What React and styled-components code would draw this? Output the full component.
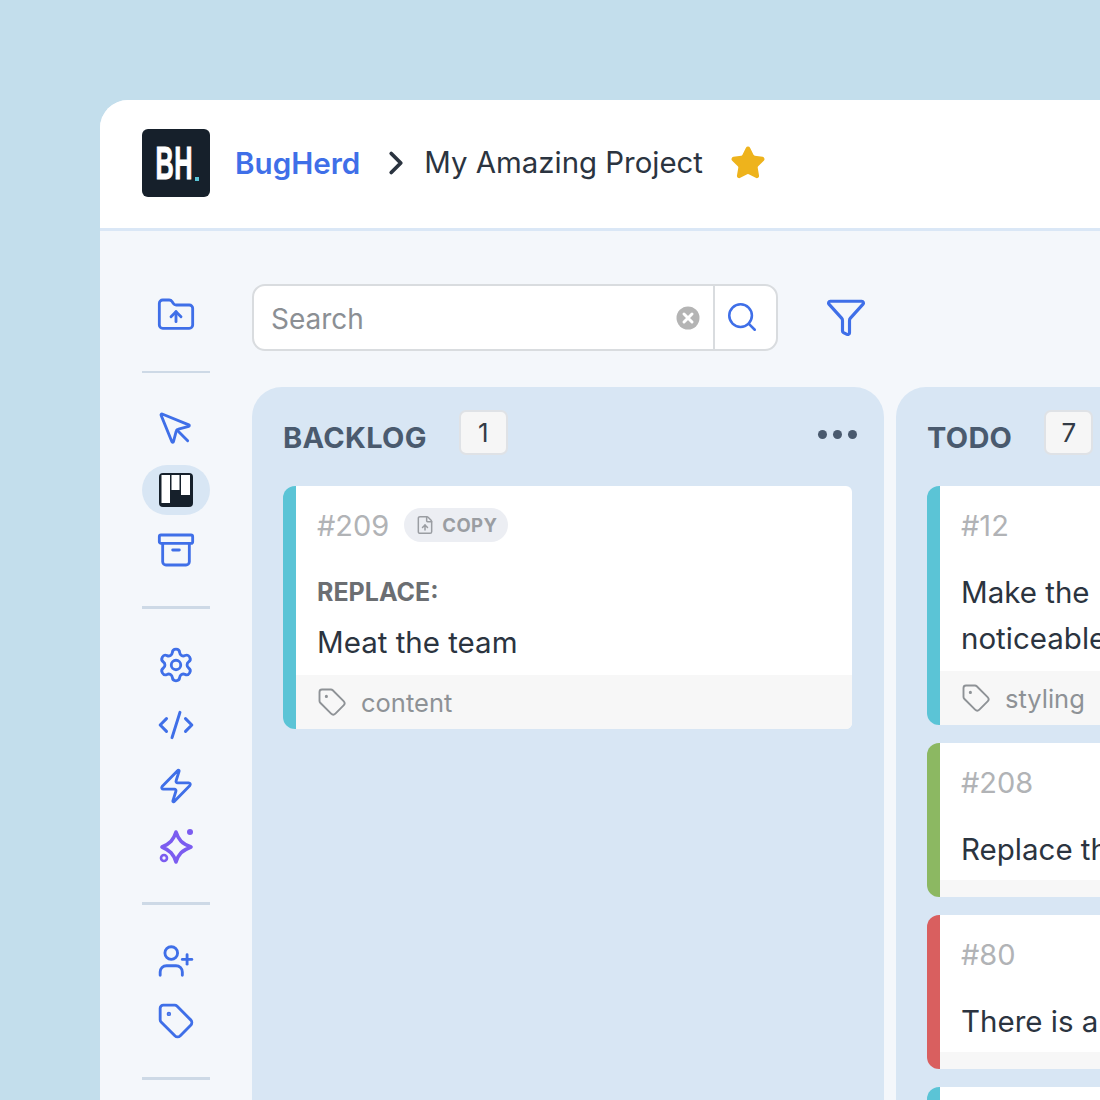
import React from 'react';
import styled, { createGlobalStyle } from "styled-components";
import {
    FolderUp, MousePointer, Archive, Settings, CodeXml, Zap, UserPlus, Tag,
    Search, Filter, ChevronRight, Star, FileUp
} from "lucide-react";

const GlobalStyle = createGlobalStyle`
    html, body { margin: 0; padding: 0; }
    body { background: #c3deec; font-family: Inter, "Liberation Sans", sans-serif; }
    * { box-sizing: border-box; }
`;

const Page = styled.div`
    width: 1100px;
    height: 1100px;
    padding: 100px 0 0 100px;
    overflow: hidden;
    background: #c3deec;
`;

const Window = styled.div`
    width: 1000px;
    height: 1000px;
    border-top-left-radius: 28px;
    overflow: hidden;
    background: #f4f7fb;
`;

const Header = styled.header`
    height: 131px;
    display: flex;
    align-items: center;
    padding: 0 0 3px 42px;
    background: #fff;
    border-bottom: 3px solid #dae7f6;
    color: #2b3440;
`;

const Logo = styled.div`
    position: relative;
    width: 68px;
    height: 68px;
    border-radius: 6px;
    background: #16202b;
    display: flex;
    align-items: center;
    justify-content: center;
    margin-right: 25px;
    color: #fff;
`;

const LogoText = styled.span`
    font-family: "Liberation Sans", sans-serif;
    font-weight: 700;
    font-size: 46px;
    line-height: 1;
    letter-spacing: 1px;
    -webkit-text-stroke: 1px #fff;
    transform: translateX(-2px) scaleX(0.55);
`;

const LogoDot = styled.i`
    position: absolute;
    left: 53px;
    top: 48px;
    width: 4px;
    height: 4px;
    background: #5bc4d6;
`;

const Brand = styled.a`
    color: #3f6fe8;
    font-size: 29.6px;
    font-weight: 600;
    margin-right: 17px;
`;

const ProjectName = styled.span`
    font-size: 29.4px;
    margin: 0 27px 0 9px;
    white-space: nowrap;
`;

const Body = styled.div`
    display: flex;
    height: 869px;
    padding: 53px 0 0 42px;
`;

const Rail = styled.nav`
    width: 68px;
    flex-shrink: 0;
    margin-right: 42px;
    padding-top: 6px;
    display: flex;
    flex-direction: column;
    gap: 11px;
`;

const RailItem = styled.div`
    height: 50px;
    display: flex;
    align-items: center;
    justify-content: center;
    border-radius: 25px;
    color: ${(p) => p.$color || "#3f6fe8"};
    background: ${(p) => (p.$active ? "#d8e6f4" : "transparent")};
`;

const RailDivider = styled.hr`
    width: 68px;
    height: 3px;
    border: 0;
    margin: 20px 0;
    background: #cdd9e6;
`;

const Main = styled.main`
    flex: 1;
    min-width: 0;
    display: flex;
    flex-direction: column;
`;

const Toolbar = styled.div`
    display: flex;
    align-items: center;
    gap: 47px;
    height: 66px;
    margin-bottom: 37px;
    color: #3f6fe8;
`;

const SearchBox = styled.div`
    width: 526px;
    height: 67px;
    display: flex;
    align-items: center;
    background: #fff;
    border: 2px solid #d9dcdf;
    border-radius: 13px;
    padding-left: 15px;
`;

const SearchInput = styled.input`
    flex: 1;
    min-width: 0;
    border: 0;
    outline: 0;
    padding: 4px 2px 0;
    background: none;
    font: 400 28px Inter, sans-serif;
    color: #2b3440;
    &::placeholder { color: #8b8f94; opacity: 1; }
`;

const ClearButton = styled.span`
    margin: 2px 13px 0 0;
    display: flex;
`;

const SearchButton = styled.span`
    width: 63px;
    height: 100%;
    padding-right: 7px;
    display: flex;
    align-items: center;
    justify-content: center;
    border-left: 2px solid #d9dcdf;
`;

const Board = styled.div`
    flex: 1;
    display: flex;
    gap: 12px;
`;

const Column = styled.section`
    width: 632px;
    flex-shrink: 0;
    padding: 23px 32px 0 31px;
    background: #d8e6f4;
    border-radius: 30px 30px 0 0;
    overflow: hidden;
`;

const ColumnHead = styled.div`
    display: flex;
    align-items: center;
    height: 45px;
    margin-bottom: 31px;
`;

const ColumnTitle = styled.h2`
    margin: 9px 32px 0 0;
    font-size: 29px;
    font-weight: 700;
    color: #4a5a6e;
    letter-spacing: 0.3px;
`;

const Count = styled.span`
    width: 49px;
    height: 45px;
    display: flex;
    align-items: center;
    justify-content: center;
    background: #f6f6f6;
    border: 2px solid #dfe2e6;
    border-radius: 7px;
    font-size: 26px;
    color: #333b46;
`;

const Dots = styled.span`
    margin: 3px -5px 0 auto;
    display: flex;
    gap: 6px;
    & > i {
        width: 9px;
        height: 9px;
        border-radius: 50%;
        background: #4a5a6e;
    }
`;

const CardList = styled.div`
    display: flex;
    flex-direction: column;
    gap: 18px;
`;

const Card = styled.article`
    border-left: 13px solid ${(p) => p.$strip};
    border-radius: 12px 6px 6px 12px;
    background: #fff;
    overflow: hidden;
`;

const CardBody = styled.div`
    padding: 20px 16px ${(p) => (p.$filled ? "10px" : "8px")} 21px;
`;

const CardTop = styled.div`
    height: 38px;
    margin-bottom: 25px;
    display: flex;
    align-items: center;
    gap: 15px;
`;

const CardId = styled.span`
    font-size: 29px;
    color: #b1b3b6;
`;

const CopyPill = styled.span`
    height: 34px;
    padding: 0 11px;
    display: flex;
    align-items: center;
    gap: 7px;
    border-radius: 17px;
    background: #eceef3;
    color: #9a9da2;
    font-size: 18.5px;
    font-weight: 700;
    letter-spacing: 0.4px;
`;

const Label = styled.div`
    height: 46px;
    margin-bottom: 4px;
    line-height: 46px;
    font-size: 25px;
    font-weight: 700;
    color: #6b6e72;
`;

const CardText = styled.div`
    font-size: 29.5px;
    line-height: 46px;
    color: #2b3440;
    white-space: nowrap;
`;

const CardFooter = styled.div`
    display: flex;
    align-items: center;
    gap: 14px;
    padding: ${(p) => (p.$filled ? "0 21px" : "0")};
    height: ${(p) => (p.$filled ? "54px" : "17px")};
    background: #f7f7f7;
    color: #8e9296;
    font-size: 25.5px;
`;

const BoardIcon = () => (
    <svg width="34" height="34" viewBox="0 0 34 34">
        <rect width="34" height="34" rx="4" fill="#16202b" />
        <rect x="2.5" y="2" width="8.5" height="28" fill="#fff" />
        <rect x="12.5" y="2" width="8" height="15" fill="#fff" />
        <rect x="22" y="2" width="9" height="20" fill="#fff" />
    </svg>
);

const SparkIcon = () => (
    <svg width="38" height="38" viewBox="0 0 38 38" fill="none" stroke="currentColor" strokeWidth="3.6" strokeLinejoin="round">
        <path d="M19 5 C21.5 13 25 16.5 34 20 C25 23.5 21.5 27 19 35 C16.5 27 13 23.5 5 20 C13 16.5 16.5 13 19 5 Z" />
        <circle cx="7" cy="31" r="3" strokeWidth="2.6" />
        <circle cx="33" cy="5" r="3" fill="currentColor" stroke="none" />
    </svg>
);

const ClearIcon = () => (
    <svg width="24" height="24" viewBox="0 0 24 24">
        <circle cx="12" cy="12" r="11.5" fill="#b4b4b4" />
        <path d="M8 8l8 8M16 8l-8 8" stroke="#fff" strokeWidth="3" strokeLinecap="round" />
    </svg>
);

const columns = [
    {
        title: "BACKLOG",
        count: 1,
        cards: [
            { id: "#209", strip: "#5bc4d6", copy: true, label: "REPLACE:", text: ["Meat the team"], tag: "content" }
        ]
    },
    {
        title: "TODO",
        count: 7,
        cards: [
            { id: "#12", strip: "#5bc4d6", text: ["Make the", "noticeable on the pricing page"], tag: "styling" },
            { id: "#208", strip: "#8cb862", text: ["Replace the hero image"] },
            { id: "#80", strip: "#d95f5f", text: ["There is a typo in this heading"] },
            { id: "#64", strip: "#5bc4d6", text: ["Update the footer links"] }
        ]
    }
];

function App() {
    return (
        <Page>
            <GlobalStyle />
            <Window>
                <Header>
                    <Logo>
                        <LogoText>BH</LogoText>
                        <LogoDot />
                    </Logo>
                    <Brand>BugHerd</Brand>
                    <ChevronRight size={38} strokeWidth={2.4} />
                    <ProjectName>My Amazing Project</ProjectName>
                    <Star size={36} fill="#eeb31c" stroke="#eeb31c" strokeWidth={2} />
                </Header>
                <Body>
                    <Rail>
                        <RailItem><FolderUp size={40} strokeWidth={1.7} /></RailItem>
                        <RailDivider />
                        <RailItem><MousePointer size={40} strokeWidth={1.7} /></RailItem>
                        <RailItem $active><BoardIcon /></RailItem>
                        <RailItem><Archive size={40} strokeWidth={1.7} /></RailItem>
                        <RailDivider />
                        <RailItem><Settings size={38} strokeWidth={1.8} /></RailItem>
                        <RailItem><CodeXml size={38} strokeWidth={1.9} /></RailItem>
                        <RailItem><Zap size={38} strokeWidth={1.8} /></RailItem>
                        <RailItem $color="#7b5cf0"><SparkIcon /></RailItem>
                        <RailDivider />
                        <RailItem><UserPlus size={38} strokeWidth={1.8} /></RailItem>
                        <RailItem><Tag size={38} strokeWidth={1.8} /></RailItem>
                        <RailDivider />
                    </Rail>
                    <Main>
                        <Toolbar>
                            <SearchBox>
                                <SearchInput placeholder="Search" />
                                <ClearButton><ClearIcon /></ClearButton>
                                <SearchButton><Search size={34} strokeWidth={1.8} /></SearchButton>
                            </SearchBox>
                            <Filter size={42} strokeWidth={1.8} />
                        </Toolbar>
                        <Board>
                            {columns.map((col) => (
                                <Column key={col.title}>
                                    <ColumnHead>
                                        <ColumnTitle>{col.title}</ColumnTitle>
                                        <Count>{col.count}</Count>
                                        <Dots><i /><i /><i /></Dots>
                                    </ColumnHead>
                                    <CardList>
                                        {col.cards.map((c) => (
                                            <Card key={c.id} $strip={c.strip}>
                                                <CardBody $filled={!!c.tag}>
                                                    <CardTop>
                                                        <CardId>{c.id}</CardId>
                                                        {c.copy && (
                                                            <CopyPill>
                                                                <FileUp size={20} strokeWidth={1.8} />
                                                                COPY
                                                            </CopyPill>
                                                        )}
                                                    </CardTop>
                                                    {c.label && <Label>{c.label}</Label>}
                                                    {c.text.map((line) => (
                                                        <CardText key={line}>{line}</CardText>
                                                    ))}
                                                </CardBody>
                                                <CardFooter $filled={!!c.tag}>
                                                    {c.tag && (
                                                        <>
                                                            <Tag size={30} strokeWidth={1.5} />
                                                            {c.tag}
                                                        </>
                                                    )}
                                                </CardFooter>
                                            </Card>
                                        ))}
                                    </CardList>
                                </Column>
                            ))}
                        </Board>
                    </Main>
                </Body>
            </Window>
        </Page>
    );
}

export default App;
